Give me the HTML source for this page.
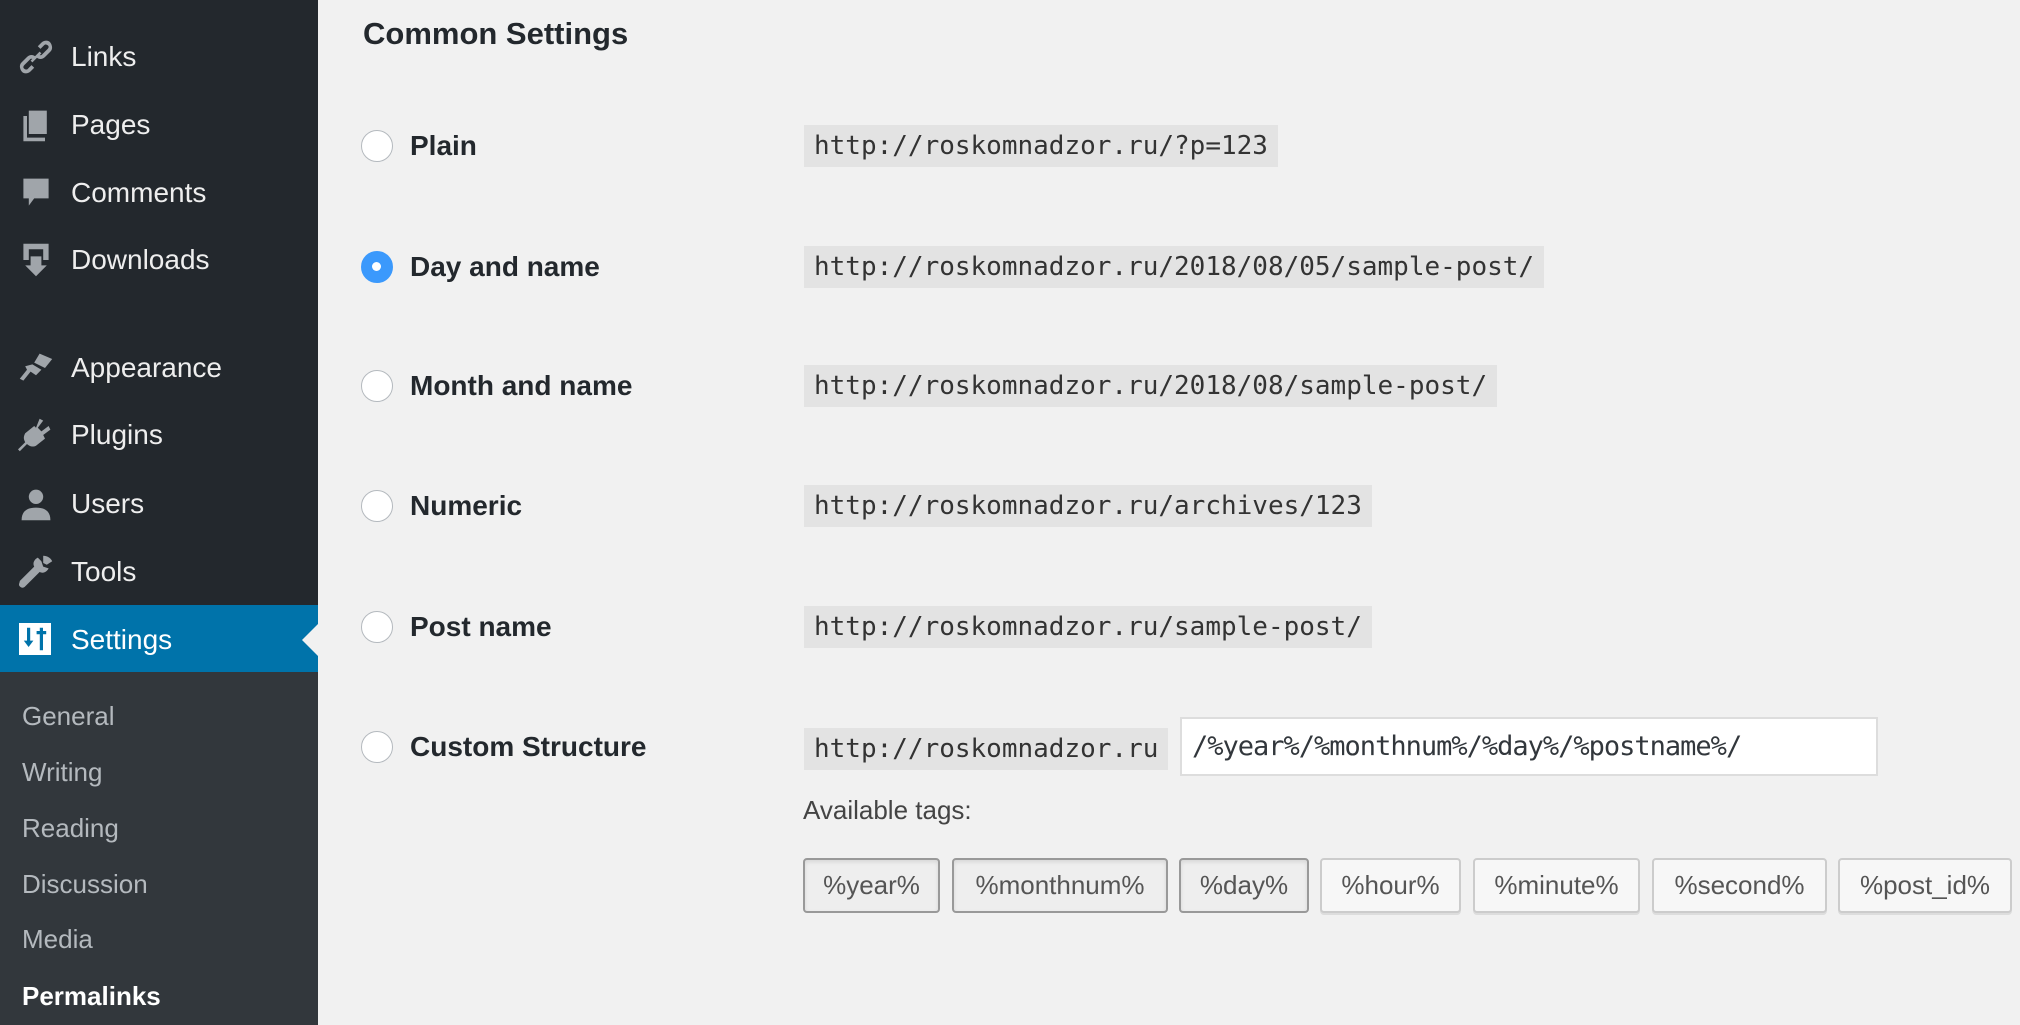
<!DOCTYPE html>
<html><head><meta charset="utf-8"><style>
*{margin:0;padding:0;box-sizing:border-box}
body{width:2020px;height:1025px;background:#f1f1f1;font-family:"Liberation Sans",Arial,sans-serif;position:relative;overflow:hidden;color:#23282d}
.sb{position:absolute;left:0;top:0;width:318px;height:1025px;background:#23282d}
.sub{position:absolute;left:0;top:672px;width:318px;height:353px;background:#32373c}
.act{position:absolute;left:0;top:605px;width:318px;height:67px;background:#0073aa}
.arrow{position:absolute;left:302px;top:624px;width:0;height:0;border-top:16px solid transparent;border-bottom:16px solid transparent;border-right:16px solid #f1f1f1}
.mi{position:absolute;left:71px;font-size:28px;color:#eee;line-height:1;transform:translateY(-50%)}
.ic{position:absolute;left:18px;transform:translateY(-50%);fill:#a0a5aa}
.si{position:absolute;left:22px;font-size:26px;color:#b4b9be;line-height:1;transform:translateY(-50%)}
h2{position:absolute;left:363px;top:16px;font-size:31px;font-weight:bold;color:#23282d}
.r{position:absolute;left:361px;width:32px;height:32px;border-radius:50%;border:1.5px solid #b4b9be;background:#fff;transform:translateY(-50%)}
.r.on{background:#3b99fc;border-color:#3b99fc}
.r.on:after{content:"";position:absolute;left:10px;top:10px;width:9px;height:9px;border-radius:50%;background:#fff}
.lb{position:absolute;left:410px;font-size:28px;font-weight:bold;transform:translateY(-50%);line-height:1}
code{position:absolute;left:804px;height:42px;line-height:42px;padding:0 10px;background:#e3e3e3;font-family:"DejaVu Sans Mono","Liberation Mono",monospace;font-size:26px;color:#333;transform:translateY(-50%)}
.inp{position:absolute;left:1180px;top:717px;width:698px;height:59px;background:#fff;border:2px solid #ddd;font-family:"DejaVu Sans Mono",monospace;font-size:27px;line-height:55px;padding-left:10px;color:#32373c;letter-spacing:-1px}
.av{position:absolute;left:803px;top:795px;font-size:26px;color:#444}
.b{position:absolute;top:858px;height:55px;border:2px solid #ccc;border-radius:4px;background:#f7f7f7;font-size:26px;color:#555;text-align:center;line-height:51px;box-shadow:0 2px 0 #ddd}
.b.p{background:#eee;border-color:#999;box-shadow:inset 0 2px 4px rgba(0,0,0,.1)}
</style></head><body>
<div class="sb"></div><div class="sub"></div><div class="act"></div><div class="arrow"></div>
<svg class="ic" style="top:57px" width="36" height="36" viewBox="0 0 20 20"><path d="M11 4l2-2c1.5-1.5 4-1.5 5 0s1.5 3.5 0 5l-3 3c-1.5 1.5-3.5 1.5-5 0l1.5-1.5c.7.7 1.5.7 2 0l3-3c.7-.7.7-1.5 0-2s-1.5-.7-2 0l-2 2zM9 16l-2 2c-1.5 1.5-4 1.5-5 0s-1.5-3.5 0-5l3-3c1.5-1.5 3.5-1.5 5 0L8.5 11.5c-.7-.7-1.5-.7-2 0l-3 3c-.7.7-.7 1.5 0 2s1.5.7 2 0l2-2zM7 12l5-5 1 1-5 5z"/></svg>
<div class="mi" style="top:57px">Links</div>
<svg class="ic" style="top:125px" width="36" height="36" viewBox="0 0 20 20"><path d="M6 2h10v13H6zM3 5h2v12h10v2H3z"/></svg>
<div class="mi" style="top:125px">Pages</div>
<svg class="ic" style="top:193px" width="36" height="36" viewBox="0 0 20 20"><path d="M3 2h14v11H9l-3 4v-4H3z"/></svg>
<div class="mi" style="top:193px">Comments</div>
<svg class="ic" style="top:260px" width="36" height="36" viewBox="0 0 20 20"><path d="M3 1h14v9h-3V4H6v6H3zM7 8h6v5h3l-6 6-6-6h3z"/></svg>
<div class="mi" style="top:260px">Downloads</div>
<svg class="ic" style="top:368px" width="36" height="36" viewBox="0 0 20 20"><path d="M12 2l7 3-4 5-6-3zM8 8l5 3-3 3-3-2-4 5-2-1 4-5-1-2z"/></svg>
<div class="mi" style="top:368px">Appearance</div>
<svg class="ic" style="top:435px" width="36" height="36" viewBox="0 0 20 20"><path d="M12 1l2 1-3 4 2 2 4-3 1 2-4 3 1 2-5 4c-2 1-4 0-5-1l-4 4-1-1 4-4c-1-2-1-3 0-5l5-4 1 1z"/></svg>
<div class="mi" style="top:435px">Plugins</div>
<svg class="ic" style="top:504px" width="36" height="36" viewBox="0 0 20 20"><circle cx="10" cy="6" r="4"/><path d="M2 19c0-5 3-7 8-7s8 2 8 7z"/></svg>
<div class="mi" style="top:504px">Users</div>
<svg class="ic" style="top:572px" width="36" height="36" viewBox="0 0 20 20"><path d="M14 1c2 0 4 1 5 3l-3 2-2-1 0-2zM13 4l1 3 3 1c-1 2-3 3-5 2L4 18c-1 1-2 1-3 0s0-2 0-3l8-8c-1-2 0-4 2-5z"/></svg>
<div class="mi" style="top:572px">Tools</div>
<svg style="position:absolute;left:19px;top:623px" width="32" height="32" viewBox="0 0 20 20"><rect width="20" height="20" fill="#fff"/><path d="M5 3h2v8h2l-3 4-3-4h2zM13 3h2v2h2v2h-2v10h-2V7h-2V5h2z" fill="#0073aa"/></svg>
<div class="mi" style="top:640px;color:#fff">Settings</div>
<div class="si" style="top:716px">General</div>
<div class="si" style="top:772px">Writing</div>
<div class="si" style="top:828px">Reading</div>
<div class="si" style="top:884px">Discussion</div>
<div class="si" style="top:939px">Media</div>
<div class="si" style="top:996px;color:#fff;font-weight:bold">Permalinks</div>

<h2>Common Settings</h2>
<div class="r" style="top:146px"></div><div class="lb" style="top:146px">Plain</div><code style="top:146px">http://roskomnadzor.ru/?p=123</code>
<div class="r on" style="top:267px"></div><div class="lb" style="top:267px">Day and name</div><code style="top:267px">http://roskomnadzor.ru/2018/08/05/sample-post/</code>
<div class="r" style="top:386px"></div><div class="lb" style="top:386px">Month and name</div><code style="top:386px">http://roskomnadzor.ru/2018/08/sample-post/</code>
<div class="r" style="top:506px"></div><div class="lb" style="top:506px">Numeric</div><code style="top:506px">http://roskomnadzor.ru/archives/123</code>
<div class="r" style="top:627px"></div><div class="lb" style="top:627px">Post name</div><code style="top:627px">http://roskomnadzor.ru/sample-post/</code>
<div class="r" style="top:747px"></div><div class="lb" style="top:747px">Custom Structure</div><code style="top:749px">http://roskomnadzor.ru</code>
<div class="inp">/%year%/%monthnum%/%day%/%postname%/</div>
<div class="av">Available tags:</div>
<div class="b p" style="left:803px;width:137px">%year%</div>
<div class="b p" style="left:952px;width:216px">%monthnum%</div>
<div class="b p" style="left:1179px;width:130px">%day%</div>
<div class="b" style="left:1320px;width:141px">%hour%</div>
<div class="b" style="left:1473px;width:167px">%minute%</div>
<div class="b" style="left:1652px;width:175px">%second%</div>
<div class="b" style="left:1838px;width:174px">%post_id%</div>
</body></html>
